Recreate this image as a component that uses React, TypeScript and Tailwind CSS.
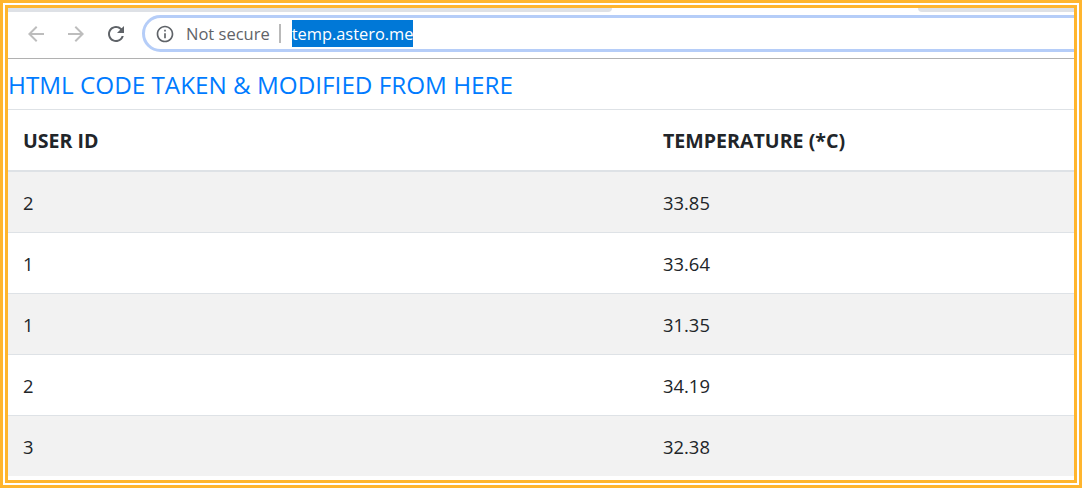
const rows = [
  ['2', '33.85'],
  ['1', '33.64'],
  ['1', '31.35'],
  ['2', '34.19'],
  ['3', '32.38'],
]

function ChromeIcon({ d, className }: { d: string; className: string }) {
  return (
    <svg viewBox="0 0 24 24" fill="currentColor" className={className}>
      <path d={d} />
    </svg>
  )
}

export default function App() {
  return (
    <div className="h-[488px] w-[1082px] overflow-hidden border-[3px] border-[#ffb52e] bg-white p-[2px] font-['Open_Sans',sans-serif]">
      <div className="flex h-[478px] w-[1072px] flex-col overflow-hidden border-[3px] border-[#ffb52e]">
        {/* tab strip */}
        <div className="flex h-[4px] shrink-0 bg-white">
          <div className="w-[604px] rounded-br-[4px] bg-[#dee1e6]" />
          <div className="flex-1" />
          <div className="w-[156px] rounded-bl-[4px] bg-[#dee1e6]" />
        </div>

        {/* toolbar */}
        <div className="flex h-[47px] shrink-0 items-center overflow-hidden border-b border-[#b1b1b1] bg-white pb-[3px] pl-[16px]">
          <ChromeIcon
            d="M20 11H7.83l5.59-5.59L12 4l-8 8 8 8 1.41-1.41L7.83 13H20v-2z"
            className="h-6 w-6 shrink-0 text-[#bdbdbd]"
          />
          <ChromeIcon
            d="M12 4l-1.41 1.41L16.17 11H4v2h12.17l-5.58 5.59L12 20l8-8z"
            className="ml-4 h-6 w-6 shrink-0 text-[#bdbdbd]"
          />
          <ChromeIcon
            d="M17.65 6.35A7.958 7.958 0 0 0 12 4c-4.42 0-7.99 3.58-7.99 8s3.57 8 7.99 8c3.73 0 6.84-2.55 7.73-6h-2.08A5.99 5.99 0 0 1 12 18c-3.31 0-6-2.69-6-6s2.69-6 6-6c1.66 0 3.14.69 4.22 1.78L13 11h7V4l-2.35 2.35z"
            className="ml-4 h-6 w-6 shrink-0 text-[#5f6368]"
          />
          <div className="ml-[14px] flex h-[37px] w-[1000px] shrink-0 items-center rounded-l-full border-[3px] border-[#b5cdf8] pl-[10px]">
            <ChromeIcon
              d="M11 7h2v2h-2zm0 4h2v6h-2zm1-9C6.48 2 2 6.48 2 12s4.48 10 10 10 10-4.48 10-10S17.52 2 12 2zm0 18c-4.41 0-8-3.59-8-8s3.59-8 8-8 8 3.59 8 8-3.59 8-8 8z"
              className="h-[20px] w-[20px] shrink-0 text-[#5f6368]"
            />
            <span className="ml-[11px] pt-[2px] text-[16.5px] text-[#5f6368]">Not secure</span>
            <span className="ml-[9px] h-[19px] w-[2px] bg-[#b9b9b9]" />
            <span className="ml-[11px] bg-[#0078d7] text-[16.4px] leading-[27px] text-white">temp.astero.me</span>
          </div>
        </div>

        {/* page */}
        <div className="flex h-[50px] shrink-0 items-center pt-[2px] text-[24.25px] text-[#007bff]">
          HTML CODE TAKEN &amp; MODIFIED FROM HERE
        </div>
        <div className="grid h-[63px] shrink-0 grid-cols-[639px_1fr] items-center border-t border-b-2 border-[#dee2e6] pt-[2px] text-[19.6px] font-bold text-[#212529]">
          <div className="pl-[15px]">USER ID</div>
          <div className="pl-4">TEMPERATURE (*C)</div>
        </div>
        {rows.map((row, i) => (
          <div
            key={i}
            className={
              i % 2 === 0
                ? 'grid h-[61px] shrink-0 grid-cols-[639px_1fr] items-center border-b border-[#dee2e6] bg-[#f2f2f2] pt-[2px] text-[18.4px] text-[#212529] last:h-[60px] last:border-b-0'
                : 'grid h-[61px] shrink-0 grid-cols-[639px_1fr] items-center border-b border-[#dee2e6] bg-white pt-[2px] text-[18.4px] text-[#212529]'
            }
          >
            <div className="pl-[15px]">{row[0]}</div>
            <div className="pl-4">{row[1]}</div>
          </div>
        ))}
      </div>
    </div>
  )
}
